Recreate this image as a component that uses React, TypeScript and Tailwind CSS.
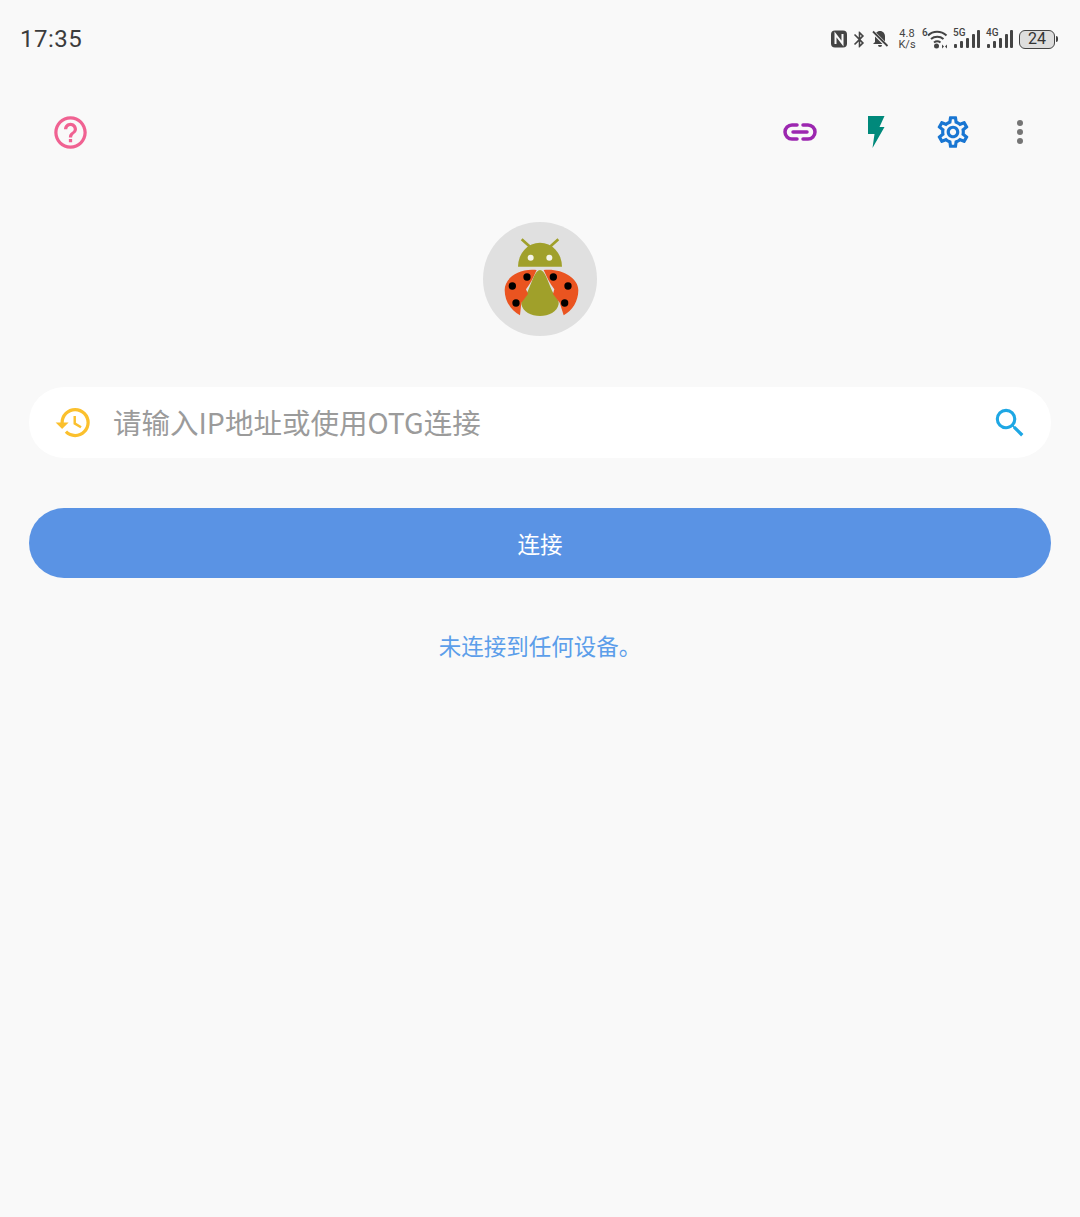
import React from 'react';
import { MdOutlineHistory, MdOutlineSettings, MdOutlineHelpOutline, MdSearch, MdBluetooth } from 'react-icons/md';

const cjk = 'font-["Noto_Sans_CJK_SC","Noto_Sans",sans-serif]';

function Signal({ label }: { label: string }) {
  return (
    <div className="relative h-[20px] w-[27px]">
      <span className="absolute left-0 top-[-2px] font-['Roboto',sans-serif] text-[10px] font-medium leading-[12px] text-[#444]">{label}</span>
      <svg width="27" height="20" viewBox="0 0 27 20" className="absolute left-0 top-0">
        <g fill="#444">
          <rect x="1" y="15" width="3" height="4" rx="1" />
          <rect x="7" y="12" width="3" height="7" rx="1" />
          <rect x="13" y="9" width="3" height="10" rx="1" />
          <rect x="19" y="5" width="3" height="14" rx="1" />
          <rect x="24" y="1" width="3" height="18" rx="1" />
        </g>
      </svg>
    </div>
  );
}

function StatusBar() {
  return (
    <div className="flex h-[78px] items-center justify-between pl-[20px] pr-[22px]">
      <span className="font-['Roboto',sans-serif] text-[24px] leading-none tracking-[0.5px] text-[#3c3c3c]">17:35</span>
      <div className="flex items-center text-[#444]">
        <svg width="16" height="18" viewBox="0 0 16 18">
          <rect x="0" y="0.5" width="16" height="17" rx="4" fill="#444" />
          <path d="M4.5 14V4.5L11.5 13.5V4" fill="none" stroke="#f9f9f9" strokeWidth="2" />
        </svg>
        <MdBluetooth size={19} className="ml-[3px]" />
        <svg width="18" height="18" viewBox="0 0 18 18" className="ml-[2px]">
          <path d="M9 1c-3 0-5 2.400-5 5.500V12l-2 2h14l-2-2V6.500C14 3.400 12 1 9 1zM7 15h4a2 2 0 0 1-4 0z" fill="#444" />
          <path d="M2 2l14 14" stroke="#f9f9f9" strokeWidth="3.500" />
          <path d="M2 1.500l14.500 14.500" stroke="#444" strokeWidth="1.800" />
        </svg>
        <div className="ml-[8px] flex w-[20px] flex-col items-center font-['Roboto',sans-serif] text-[11px] leading-[11px] text-[#444]">
          <span>4.8</span>
          <span>K/s</span>
        </div>
        <div className="relative ml-[5px] h-[20px] w-[26px]">
          <span className="absolute left-0 top-[-2px] font-['Roboto',sans-serif] text-[10px] font-medium leading-[12px]">6</span>
          <svg width="26" height="20" viewBox="0 0 26 20" className="absolute left-0 top-0">
            <g fill="none" stroke="#444" strokeWidth="2">
              <path d="M6 6.500C11 1.500 19 1.500 24.500 6.500" />
              <path d="M9 10c3.500-3 9-3 12.500 0" />
              <path d="M12 13.500c2-1.500 4.500-1.500 6.500 0" />
            </g>
            <circle cx="14.500" cy="17" r="2.500" fill="#444" />
            <path d="M20 15.500l2 2-2 2zM25 15.500l-2 2 2 2z" fill="#444" />
          </svg>
        </div>
        <div className="ml-[5px]"><Signal label="5G" /></div>
        <div className="ml-[6px]"><Signal label="4G" /></div>
        <div className="ml-[6px] flex h-[19px] w-[36px] items-center justify-center rounded-[6px] border-[1.500px] border-[#444] bg-[#dedede] font-['Roboto',sans-serif] text-[16px] leading-none text-[#333]">24</div>
        <div className="ml-[1px] h-[6px] w-[2px] rounded-r-sm bg-[#444]" />
      </div>
    </div>
  );
}

function Toolbar() {
  return (
    <div className="flex h-[108px] items-center justify-between pl-[32px] pr-[32px]">
      <div className="flex w-[76px] justify-center">
        <MdOutlineHelpOutline size={39} color="#f06292" />
      </div>
      <div className="flex items-center">
        <div className="flex w-[76px] justify-center">
          <svg width="36" height="20" viewBox="0 0 36 20" fill="none" stroke="#9c27b0" strokeWidth="3.500" strokeLinecap="round">
            <path d="M15 3H10a7 7 0 0 0 0 14h5" />
            <path d="M21 3h5a7 7 0 0 1 0 14h-5" />
            <path d="M11 10h14" />
          </svg>
        </div>
        <div className="flex w-[76px] justify-center">
          <svg width="17" height="32" viewBox="0 0 17 32">
            <path d="M0 0H16.500L11.500 11H16.500L4.500 32L6.500 18H0Z" fill="#00897b" />
          </svg>
        </div>
        <div className="flex w-[77px] justify-center">
          <MdOutlineSettings size={38} color="#1976d2" />
        </div>
        <div className="flex w-[57px] flex-col items-center gap-[3px]">
          <span className="h-[6px] w-[6px] rounded-full bg-[#757575]" />
          <span className="h-[6px] w-[6px] rounded-full bg-[#757575]" />
          <span className="h-[6px] w-[6px] rounded-full bg-[#757575]" />
        </div>
      </div>
    </div>
  );
}

function Logo() {
  return (
    <svg width="114" height="114" viewBox="39 36 342 342">
      <circle cx="210" cy="207" r="171" fill="#e0e0e0" />
      <path d="M155 88L180 110M265 88L240 110" stroke="#a0a02a" strokeWidth="8" />
      <path d="M144 170a66 72 0 0 1 132 0z" fill="#a0a02a" />
      <circle cx="182" cy="143" r="9" fill="#f3f3e6" />
      <circle cx="238" cy="143" r="9" fill="#f3f3e6" />
      <path d="M210 180c14 0 22 30 36 62 8 16 22 26 20 40-4 24-30 36-56 36s-52-12-56-36c-2-14 12-24 20-40 14-32 22-62 36-62z" fill="#a0a02a" />
      <path d="M200 180c-10 22-18 40-32 58l6 14-20 26-4 38c-26-14-46-42-46-76 0-36 42-66 96-60z" fill="#ea5420" />
      <path d="M221 180c10 22 18 40 32 58l-4 14 20 26 12 38c26-14 44-42 44-76 0-36-50-66-104-60z" fill="#ea5420" />
      <g fill="#000">
        <circle cx="171" cy="201" r="11" />
        <circle cx="127" cy="228" r="11" />
        <circle cx="138" cy="279" r="11" />
        <circle cx="250" cy="201" r="11" />
        <circle cx="294" cy="228" r="11" />
        <circle cx="284" cy="279" r="11" />
      </g>
    </svg>
  );
}

export default function App() {
  return (
    <div className={`flex min-h-[1217px] flex-col bg-[#f9f9f9] ${cjk}`}>
      <StatusBar />
      <Toolbar />

      <div className="mt-[36px] flex justify-center">
        <Logo />
      </div>

      {/* address input */}
      <div className="mx-[29px] mt-[51px] flex h-[71px] items-center rounded-[35px] bg-white pl-[25px] pr-[22px]">
        <MdOutlineHistory size={39} color="#fbc02d" />
        <span className="ml-[20px] flex-1 text-[28.500px] leading-none text-[#9b9b9b]">请输入IP地址或使用OTG连接</span>
        <MdSearch size={38} color="#1ea7e4" />
      </div>

      <button className="mx-[29px] mt-[50px] flex h-[70px] items-center justify-center rounded-[35px] bg-[#5a93e4] text-[22.500px] leading-none text-white">
        连接
      </button>

      <p className="mt-[54px] text-center text-[22.500px] leading-[26px] text-[#5c9eea]">未连接到任何设备。</p>
    </div>
  );
}
